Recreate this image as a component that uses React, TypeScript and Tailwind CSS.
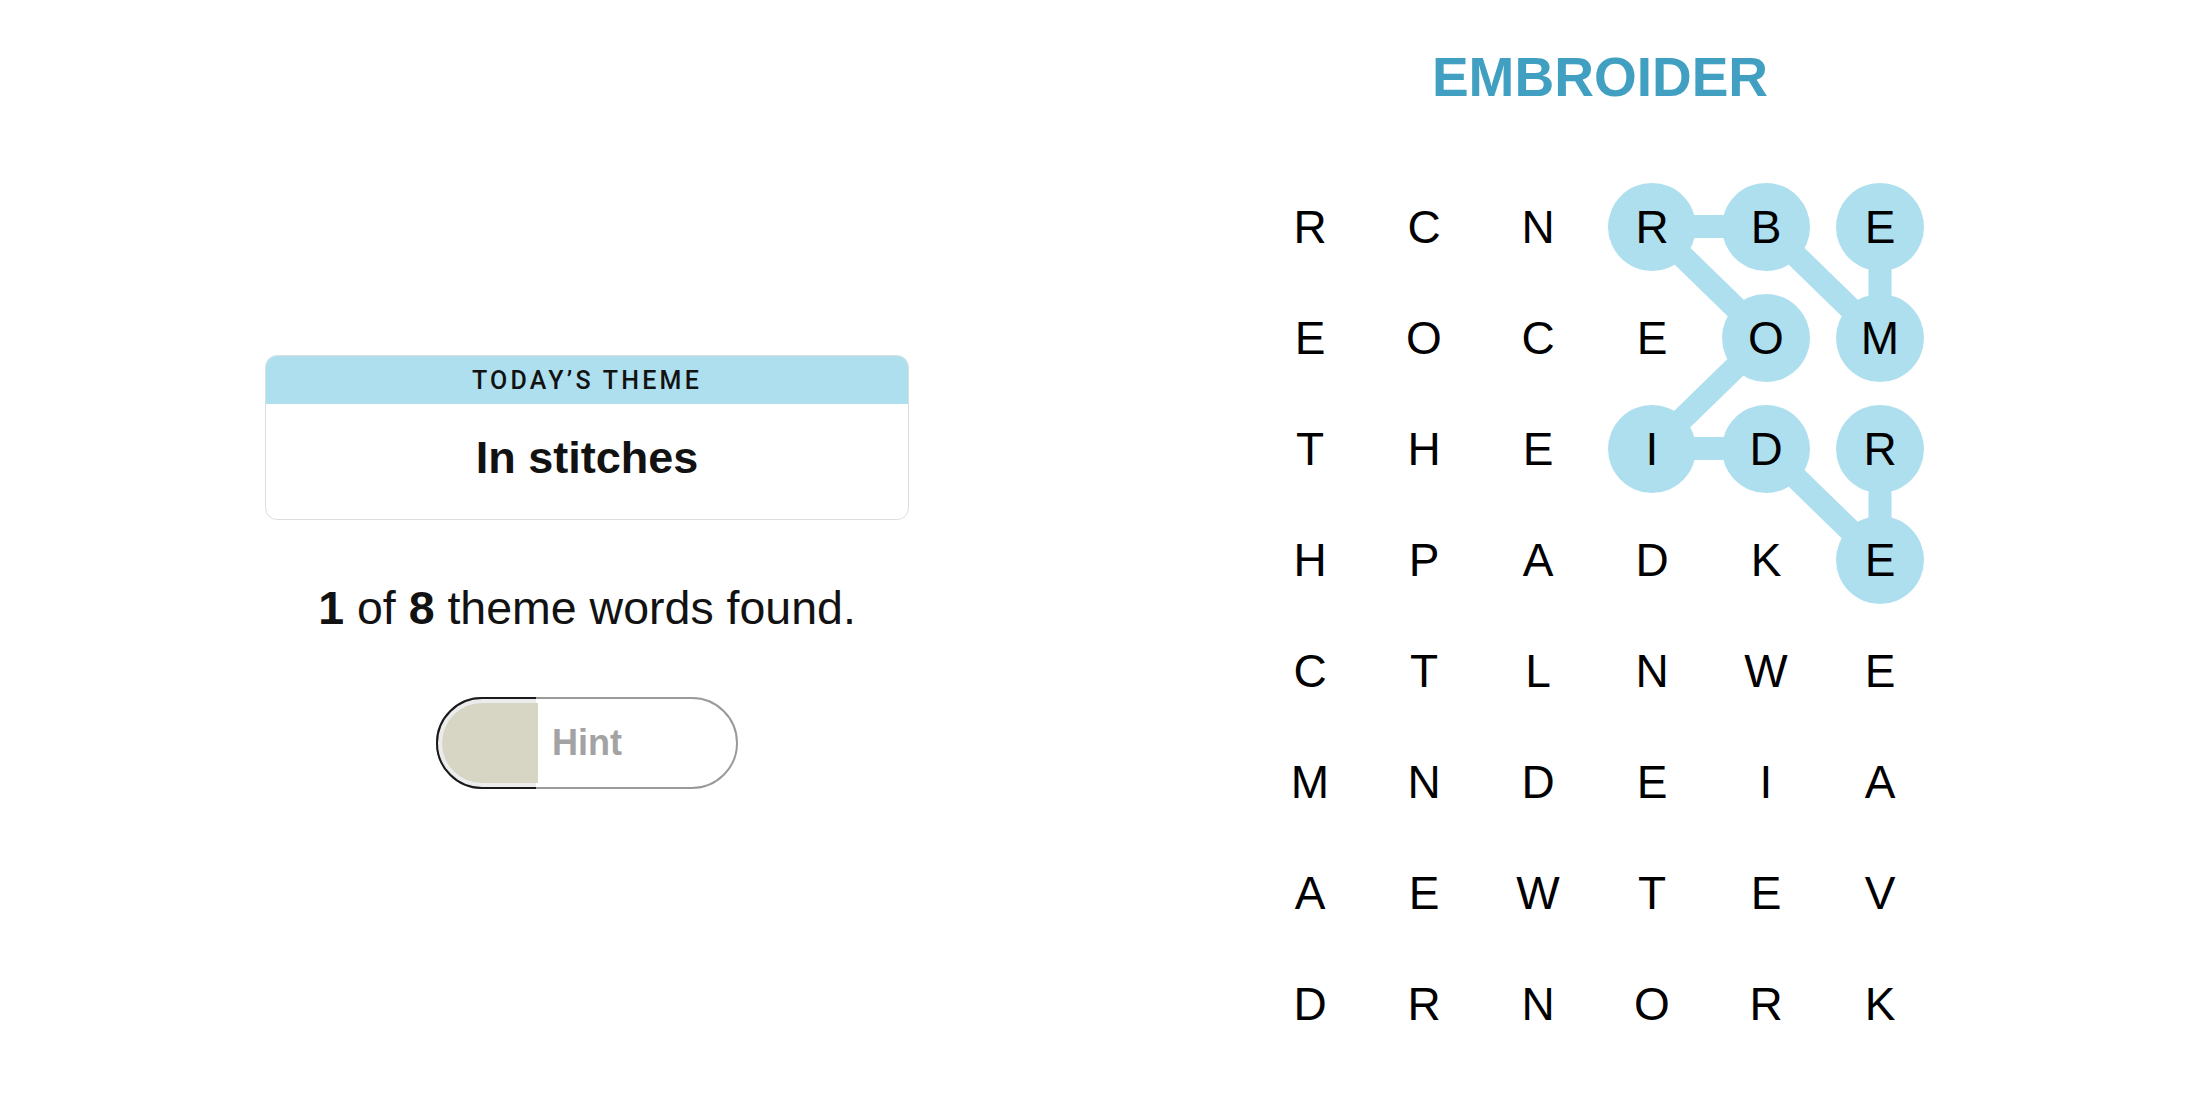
import React from "react";

const ROWS = ["RCNRBE", "EOCEOM", "THEIDR", "HPADKE", "CTLNWE", "MNDEIA", "AEWTEV", "DRNORK"];
const HIGHLIGHT = new Set(["0-3", "0-4", "0-5", "1-4", "1-5", "2-3", "2-4", "2-5", "3-5"]);
const PATH: [number, number][] = [
  [0, 5],
  [1, 5],
  [0, 4],
  [0, 3],
  [1, 4],
  [2, 3],
  [2, 4],
  [3, 5],
  [2, 5],
];
const CW = 114;
const RH = 111;

function Grid() {
  const pts = PATH.map(([r, c]) => `${CW / 2 + CW * c},${RH / 2 + RH * r}`).join(" ");
  return (
    <div className="relative w-[684px] h-[888px]">
      <svg className="absolute inset-0" width={684} height={888} viewBox="0 0 684 888">
        <polyline points={pts} fill="none" stroke="#aedfee" strokeWidth={23} strokeLinejoin="round" />
      </svg>
      <div className="relative grid grid-cols-[repeat(6,114px)] grid-rows-[repeat(8,111px)]">
        {ROWS.map((row, r) =>
          row.split("").map((ch, c) => (
            <div key={`${r}-${c}`} className="flex items-center justify-center">
              <div
                className={`w-[88px] h-[88px] rounded-full flex items-center justify-center text-[46px] leading-none text-black ${
                  HIGHLIGHT.has(`${r}-${c}`) ? "bg-[#aedfee]" : ""
                }`}
              >
                {ch}
              </div>
            </div>
          ))
        )}
      </div>
    </div>
  );
}

function HintButton() {
  return (
    <div className="relative w-[302px] h-[92px] mt-[63px]">
      <div className="absolute inset-0 rounded-full border-2 border-[#9a9a9a] bg-white" />
      <div className="absolute left-0 top-0 h-[92px] w-[100px] overflow-hidden">
        <div className="w-[302px] h-[92px] rounded-full border-2 border-[#1a1a1a] bg-[#ececec] p-[4px]">
          <div className="w-full h-full rounded-full bg-[#d7d6c4]" />
        </div>
      </div>
      <div className="absolute left-[98px] top-[6px] w-[4px] h-[80px] bg-[#d7d6c4]" />
      <div className="absolute inset-0 flex items-center justify-center text-[36px] font-bold text-[#a3a3a3] leading-none">
        Hint
      </div>
    </div>
  );
}

export default function App() {
  return (
    <div
      className="w-[2200px] h-[1100px] bg-white flex"
      style={{ fontFamily: '"Liberation Sans", Arial, sans-serif' }}
    >
      <div className="ml-[265px] pt-[355px] w-[644px] flex flex-col items-center">
        <div className="w-[644px] h-[165px] rounded-[12px] border border-[#dedede] overflow-hidden bg-white flex flex-col">
          <div
            className="h-[48px] bg-[#aedfee] flex items-center justify-center text-[25px] font-medium tracking-[0.13em] text-[#121212] leading-none"
            style={{ fontFamily: 'Roboto, "Liberation Sans", sans-serif' }}
          >
            TODAY’S THEME
          </div>
          <div className="flex-1 flex justify-center pt-[31px]">
            <div className="text-[45px] font-bold leading-none text-[#121212]">In stitches</div>
          </div>
        </div>
        <div className="mt-[62px] text-[46.5px] leading-[52px] text-[#121212]">
          <span className="font-bold">1</span> of <span className="font-bold">8</span> theme words found.
        </div>
        <HintButton />
      </div>
      <div className="ml-[344px] w-[684px] flex flex-col">
        <div className="mt-[49px] h-[56px] pl-[10px] flex items-center justify-center text-[55px] font-bold leading-none text-[#41a0c2]">
          EMBROIDER
        </div>
        <div className="mt-[66px]">
          <Grid />
        </div>
      </div>
    </div>
  );
}
